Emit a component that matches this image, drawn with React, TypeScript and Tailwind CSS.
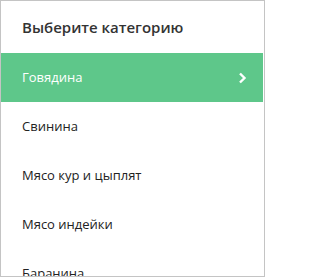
import React from "react";

const items = ["Говядина", "Свинина", "Мясо кур и цыплят", "Мясо индейки", "Баранина"];

export default function App() {
  return (
    <div
      className="w-[265px] h-[277px] border border-[#c4c4c4] bg-white overflow-hidden"
      style={{ fontFamily: '"Open Sans", "Noto Sans", sans-serif' }}
    >
      <div className="h-[52px] flex items-center pl-[21px] text-[15px] font-semibold text-[#333]">
        Выберите категорию
      </div>
      <div className="flex flex-col mr-px">
        {items.map((it, i) => (
          <div
            key={it}
            className={
              i === 0
                ? "h-[49px] shrink-0 flex items-center justify-between pl-[21px] pr-[16px] bg-[#5ec78a] text-white text-[13px]"
                : "h-[49px] shrink-0 flex items-center pl-[21px] text-[13px] text-[#222]"
            }
          >
            <span>{it}</span>
            {i === 0 && (
              <svg width="9" height="12" viewBox="0 0 9 12" fill="none">
                <path d="M2 1.5 L6.5 6 L2 10.5" stroke="white" strokeWidth="2.4" />
              </svg>
            )}
          </div>
        ))}
      </div>
    </div>
  );
}
